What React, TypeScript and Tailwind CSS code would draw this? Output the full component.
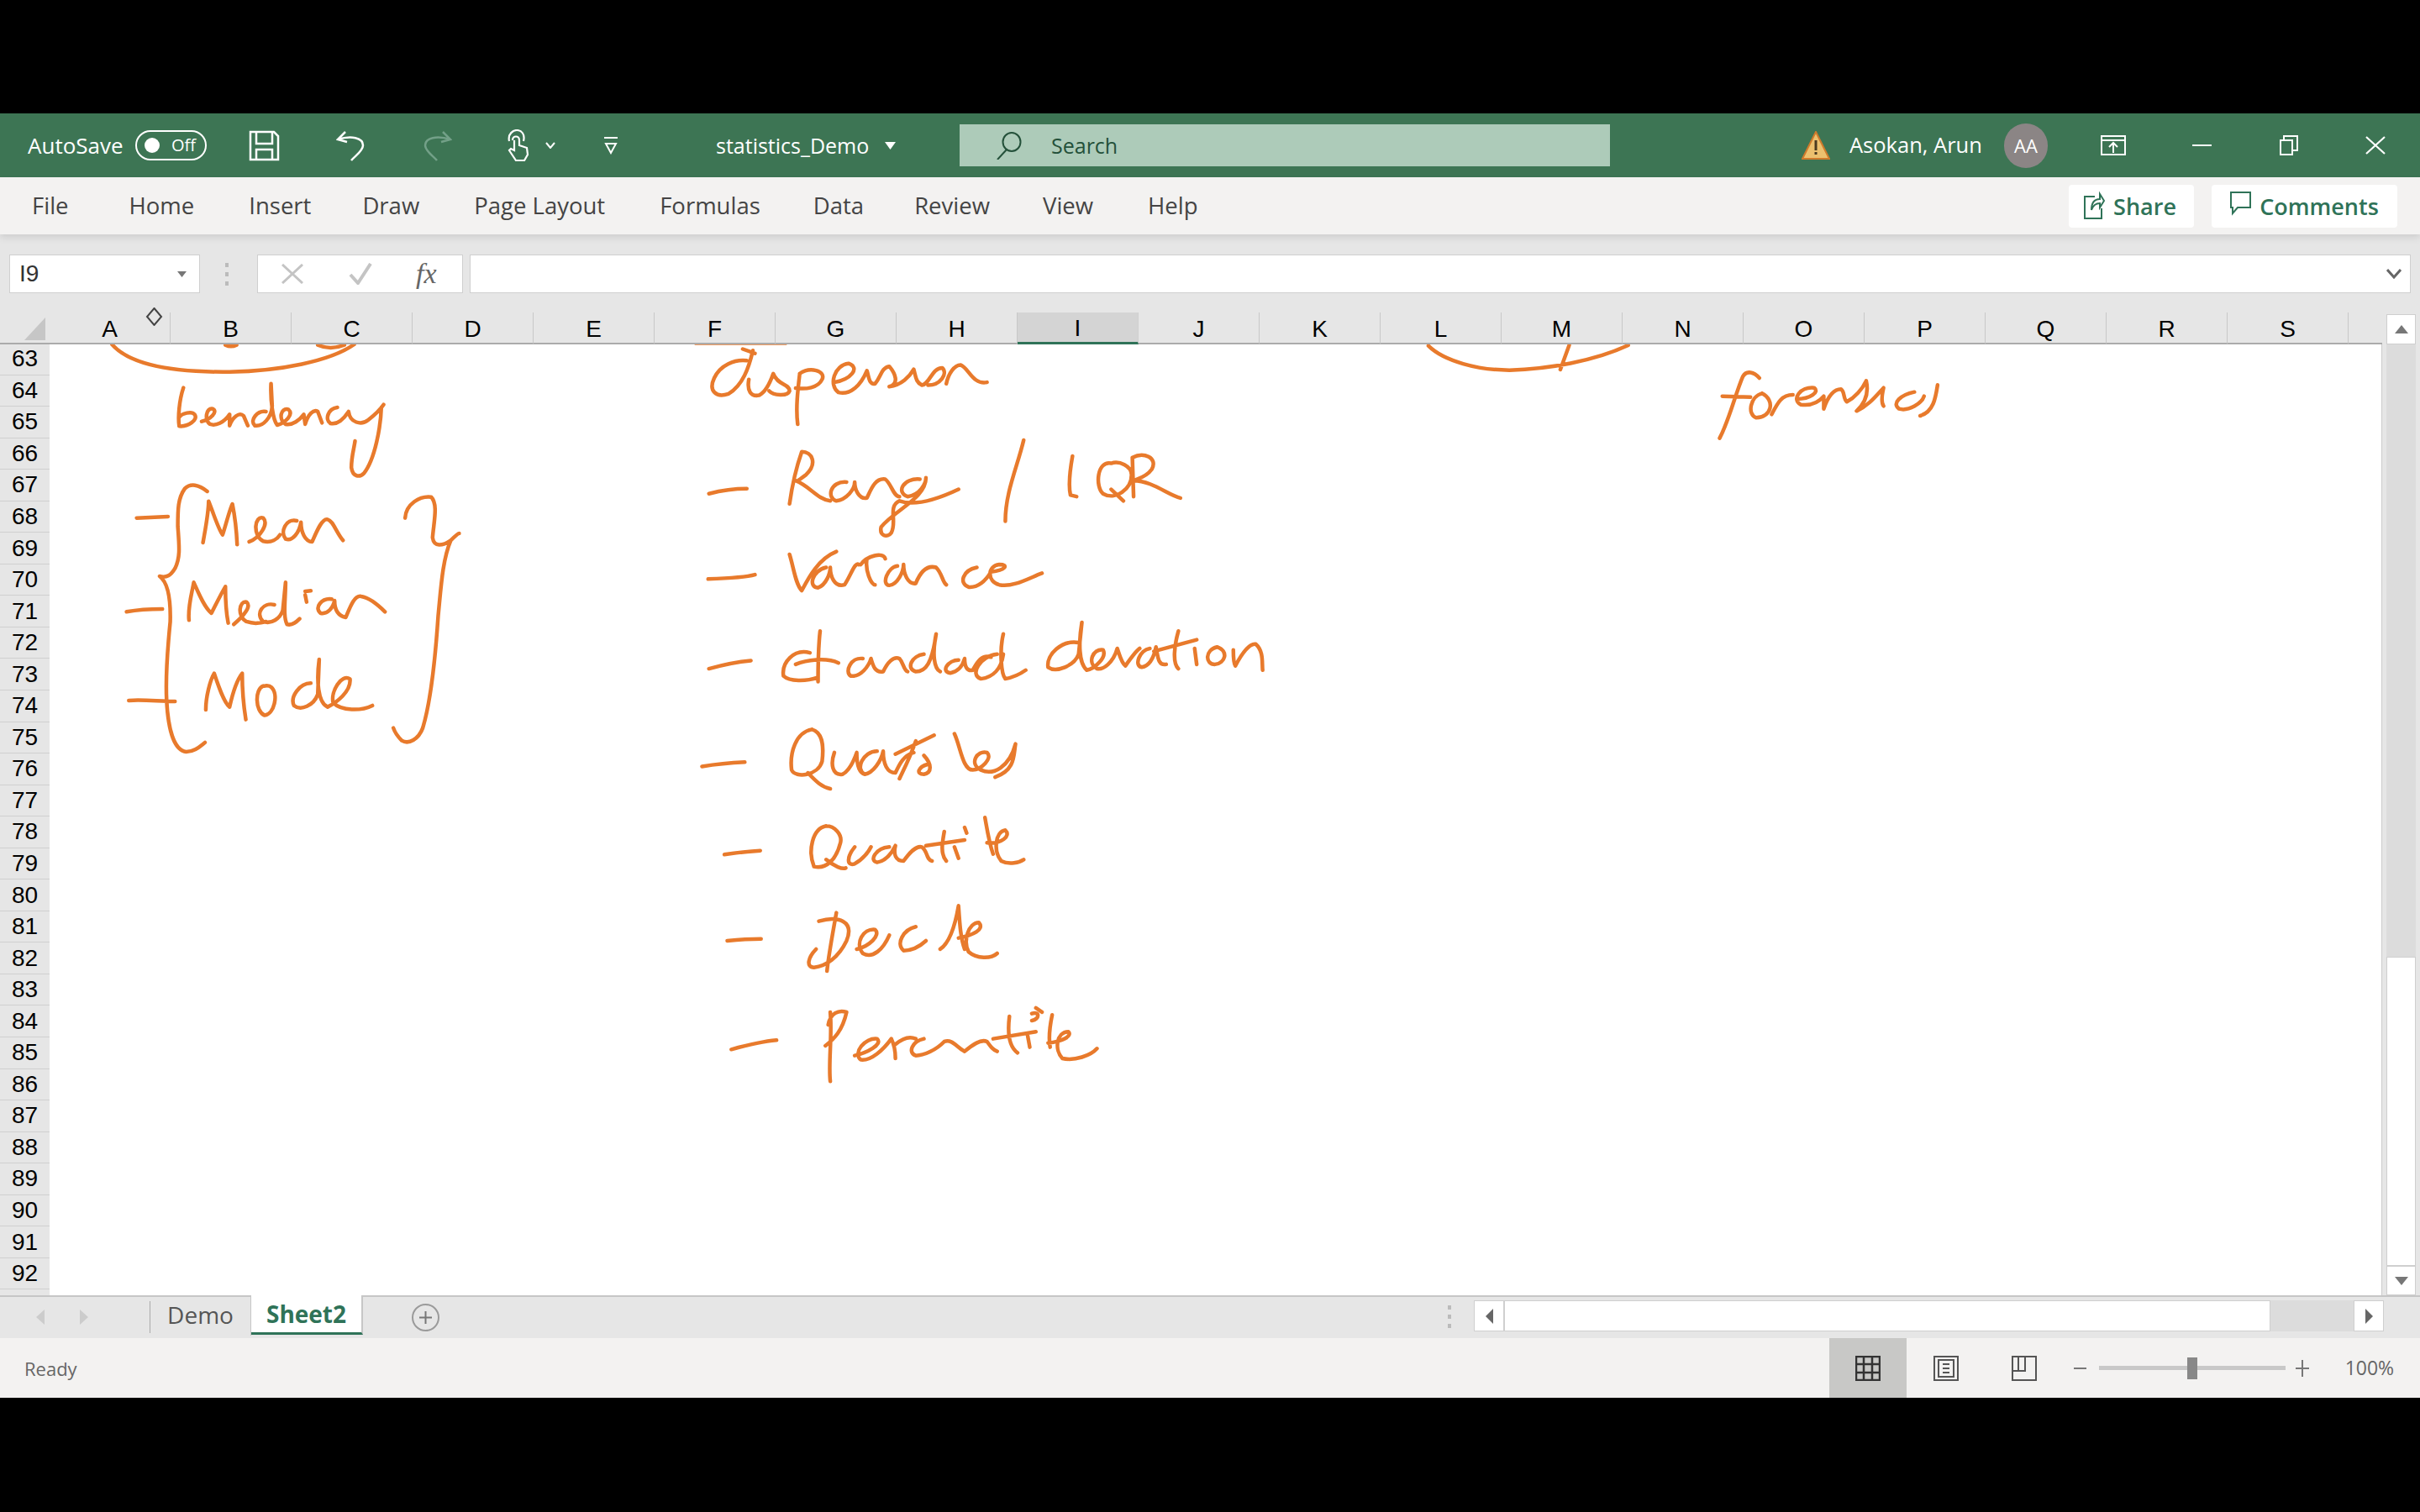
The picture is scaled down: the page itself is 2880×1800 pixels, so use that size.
const sans = 'font-["Open_Sans","Noto_Sans",sans-serif]';
const columns = ["A","B","C","D","E","F","G","H","I","J","K","L","M","N","O","P","Q","R","S"];
const rows = Array.from({ length: 31 }, (_, i) => 63 + i);
const menu = [
  { label: "File", cls: "" },
  { label: "Home", cls: "ml-[72px]" },
  { label: "Insert", cls: "ml-[65px]" },
  { label: "Draw", cls: "ml-[61px]" },
  { label: "Page Layout", cls: "ml-[65px]" },
  { label: "Formulas", cls: "ml-[65px]" },
  { label: "Data", cls: "ml-[63px]" },
  { label: "Review", cls: "ml-[60px]" },
  { label: "View", cls: "ml-[63px]" },
  { label: "Help", cls: "ml-[65px]" },
];

function Ink({ t, d }: { t: string; d: string }) {
  return (
    <g transform={t}>
      <path d={d} vectorEffect="non-scaling-stroke" />
    </g>
  );
}

const T6 = "translate(100,400) scale(0.3333,0.3333)";
const T7 = "translate(780,400) scale(0.4847,0.3444)";
const T8 = "translate(780,900) scale(0.4847,0.3333)";
const T9 = "translate(1650,400) scale(0.4592,0.3333)";

const left = `M100 30 C170 110 350 130 520 128 C700 125 880 90 965 30 M505 32 Q525 42 545 32 M835 32 Q880 52 930 32
M355 185 C340 230 335 290 340 322 C370 325 410 300 395 280 C385 268 350 275 340 290 M420 305 C450 300 480 270 460 260 C435 255 430 300 450 315 C470 322 500 310 520 280 L520 320 C530 290 555 270 570 285 L585 320
M650 270 C620 265 590 300 610 320 C640 325 670 290 672 250 L668 170 C665 230 675 300 690 318 C720 310 750 280 730 262 C700 255 695 300 720 315 C745 320 770 300 785 280 L790 315 C800 280 820 260 835 270 L850 310
M905 255 C870 260 860 300 880 312 C905 318 925 300 945 270 C950 310 990 320 1015 300 C1040 280 1060 260 1070 245 M1062 255 C1060 320 1040 440 1000 490 C985 505 960 505 955 470 C955 430 965 400 968 375
M188 650 L300 645 M440 555 C410 530 380 525 360 545 C335 580 335 620 335 680 C340 750 345 790 325 830 C310 855 295 865 270 858 C300 880 310 940 308 1020 C300 1100 290 1200 295 1300 C300 1400 320 1480 365 1485 C395 1485 415 1465 432 1452
M425 738 C435 680 445 630 445 590 C465 640 480 690 495 710 C505 680 520 620 530 600 C540 650 545 700 547 745 M590 735 C630 720 660 670 640 650 C610 640 600 710 640 733 C670 740 690 725 700 710 M760 660 C720 650 700 700 720 725 C745 735 770 700 775 665 C775 700 790 735 815 735 C830 700 850 650 870 655 C890 660 900 700 925 730
M152 985 C190 978 240 975 280 975 M375 1015 C370 970 385 920 392 880 C410 920 430 970 455 990 C470 960 490 920 505 895 C505 950 510 1000 515 1025 M535 1030 C570 1000 600 965 580 950 C555 945 545 1000 580 1020 C610 1030 630 1025 650 1020 M680 960 C640 950 610 990 640 1020 C670 1030 700 1010 710 980 L720 880 C720 940 710 1000 725 1030 C745 1035 760 1020 770 1010 M790 912 L810 910 M790 925 L795 950 M885 940 C850 935 820 970 845 990 C870 995 890 970 895 945 C895 980 910 1000 935 1005 C950 970 965 925 990 930 C1020 935 1050 960 1075 985
M160 1302 C210 1298 270 1305 325 1305 M435 1335 C435 1290 450 1230 465 1205 C480 1250 500 1310 520 1325 C530 1280 545 1230 565 1205 C565 1260 570 1320 578 1370 M640 1250 C610 1260 610 1340 645 1355 C680 1350 695 1280 670 1255 C660 1245 650 1250 640 1250 M810 1240 C770 1240 735 1290 750 1320 C775 1340 820 1320 835 1280 L840 1155 C830 1230 835 1310 870 1325 C900 1310 955 1270 950 1225 C920 1205 880 1270 890 1310 C920 1340 990 1340 1030 1320
M1147 650 C1150 600 1200 570 1240 575 C1265 600 1250 660 1245 720 C1250 755 1280 750 1310 730 C1325 715 1335 705 1340 705 M1310 730 C1280 800 1275 900 1265 1000 C1255 1150 1240 1300 1210 1400 C1195 1440 1160 1460 1135 1445 C1120 1430 1110 1415 1105 1400`;

const mid = `M100 25 L320 25 M240 50 C230 110 215 170 180 200 C150 215 130 190 145 145 C160 100 195 80 225 85 M230 150 C225 190 235 210 255 205 C270 195 280 170 290 130 C300 170 330 165 330 190 C325 210 290 205 280 190 M215 45 L245 60 M355 130 C350 190 345 250 350 305 M355 130 C380 105 420 120 410 150 C400 180 370 185 345 180 M440 160 C480 150 505 110 475 95 C440 100 425 170 450 195 C480 205 505 170 520 120 C525 140 525 170 540 165 C555 140 555 110 575 105 C590 130 600 165 575 175 C605 170 625 140 635 115 C640 140 640 160 655 170 C675 165 680 110 705 110 C720 130 700 170 670 170 M715 165 C720 130 735 100 750 100 C770 110 780 170 815 160
M132 545 C160 535 200 528 225 528 M330 580 C335 530 345 460 360 400 C385 400 400 440 370 480 C355 495 350 505 345 500 C380 520 400 565 430 570 M470 505 C430 500 420 560 445 570 C470 565 490 530 490 505 C490 530 500 565 520 560 C530 530 540 490 565 495 C580 510 585 555 600 555 M650 495 C610 490 590 540 620 555 C650 550 665 510 665 490 C665 560 590 600 555 660 C550 690 570 700 580 680 C595 640 570 590 600 570 C640 590 700 560 745 530 M905 360 C890 450 860 540 860 640 M1025 415 C1018 470 1015 520 1020 550 L1035 555 M1120 440 C1085 430 1080 520 1100 545 C1130 570 1170 530 1170 480 C1170 450 1140 430 1120 440 M1120 530 L1150 570 M1175 555 L1172 420 C1200 400 1235 420 1220 460 C1205 490 1180 495 1175 500 C1220 500 1260 550 1290 560
M130 840 C170 838 220 835 245 825 M330 755 C340 800 345 860 360 880 C375 840 400 770 445 745 M420 800 C385 810 375 870 400 870 C420 860 430 820 430 800 C430 830 440 870 465 860 C480 830 490 780 500 790 M505 790 C520 760 560 745 565 770 M520 770 C515 810 530 860 540 860 M595 795 C570 800 555 860 575 862 C595 860 610 815 610 790 C610 820 620 860 640 855 C650 820 665 790 690 800 C705 820 705 850 715 860 M790 800 C755 810 745 855 770 868 C790 870 810 850 825 815 C860 810 870 790 845 790 C815 795 815 850 845 860 C880 870 920 835 950 820
M132 1150 C170 1135 210 1125 235 1122 M380 1095 C340 1080 310 1130 315 1175 C330 1195 370 1195 400 1180 M405 1020 C400 1080 400 1150 400 1195 M345 1135 C370 1120 420 1110 450 1130 M510 1115 C480 1110 465 1160 480 1175 C505 1180 525 1140 530 1115 C535 1140 540 1165 560 1160 C570 1130 585 1105 600 1115 C610 1130 610 1155 620 1160 M660 1100 C630 1105 615 1150 640 1160 C665 1160 680 1130 690 1030 C680 1100 685 1150 700 1160 M745 1120 C720 1120 700 1160 725 1165 C745 1160 755 1140 760 1115 C760 1140 765 1160 780 1155 C790 1130 800 1100 825 1110 M840 1100 C800 1105 770 1170 800 1185 C830 1180 850 1150 855 1100 M855 1030 C845 1090 850 1170 860 1185 C880 1180 895 1170 910 1155
M1040 1060 C1000 1050 960 1100 965 1145 C985 1165 1030 1140 1040 1100 L1048 990 C1040 1060 1040 1130 1060 1155 C1080 1150 1110 1110 1100 1085 C1075 1080 1060 1130 1085 1150 C1100 1155 1125 1130 1135 1080 C1140 1100 1145 1130 1155 1140 C1170 1110 1180 1090 1190 1080 M1215 1080 C1190 1085 1175 1140 1195 1145 C1215 1140 1225 1110 1230 1075 C1235 1110 1235 1140 1255 1135 M1285 1020 C1275 1070 1270 1130 1285 1150 M1225 1090 L1330 1050 M1325 1080 L1330 1135 M1380 1075 C1350 1085 1350 1135 1375 1135 C1400 1130 1410 1090 1380 1075 M1420 1085 C1420 1110 1420 1130 1425 1140 C1440 1100 1460 1060 1475 1065 C1495 1090 1490 1130 1492 1155
M115 1488 C150 1480 190 1475 220 1473 M385 1360 C345 1370 330 1440 335 1500 C345 1530 400 1520 410 1470 C415 1410 410 1370 385 1360 M375 1510 C395 1540 410 1560 430 1565 M440 1440 C430 1480 435 1520 460 1515 C480 1500 490 1460 495 1440 C495 1480 500 1510 515 1515 M545 1435 C510 1435 490 1500 515 1515 C535 1510 555 1470 560 1435 C560 1480 570 1510 590 1510 C600 1480 610 1450 635 1440 M640 1400 C625 1460 610 1500 600 1530 M590 1445 L685 1380 M660 1450 C680 1480 680 1510 660 1515 C640 1515 645 1490 670 1480 M735 1375 C750 1420 755 1500 780 1500 C800 1500 830 1460 815 1440 C790 1430 770 1480 800 1500 C830 1520 870 1490 885 1410 C880 1450 885 1500 835 1525`;

const low = `M170 352 C200 345 230 340 258 338 M420 250 C385 260 375 340 390 395 C420 405 445 370 455 310 C460 280 440 250 420 250 M420 370 C440 395 460 405 468 400 M490 325 C470 360 470 395 490 385 C510 370 525 340 530 325 M575 325 C540 330 525 375 545 380 C565 375 580 350 590 320 C585 350 590 375 610 375 C625 345 640 320 655 325 C670 340 665 370 680 375 M710 270 C705 310 700 350 715 375 M665 320 L760 300 M760 255 L765 275 M735 325 L745 365 M810 220 C815 260 820 310 830 350 M815 310 C850 315 875 285 860 265 C835 270 830 340 850 375 C870 390 895 380 905 370
M177 660 C210 655 240 653 260 653 M445 560 C435 640 425 720 422 768 M402 590 C450 570 490 590 470 660 C450 720 420 750 390 755 C370 755 375 720 395 690 M495 690 C525 680 555 640 540 620 C510 615 490 670 510 705 C535 725 560 690 575 640 M640 610 C610 620 590 670 610 695 C630 695 650 680 665 660 M700 690 C720 670 735 620 745 535 C748 600 750 650 760 690 M745 650 C780 640 810 620 795 595 C770 595 755 660 770 700 C790 725 825 725 840 705
M187 1048 C220 1035 260 1020 298 1015 M430 1162 C425 1100 435 1000 430 915 M418 1035 C440 1010 460 980 470 915 C450 905 430 920 425 960 M490 1070 C520 1060 560 1030 545 1010 C515 1005 485 1060 505 1085 C530 1090 560 1050 580 1010 C590 1040 590 1070 590 1080 M590 1030 C610 1005 625 1000 640 1010 M660 1010 C630 1020 620 1060 640 1070 C660 1070 690 1050 710 1020 C730 1010 740 1040 760 1055 C780 1030 800 1010 815 1020 C825 1040 830 1050 840 1055 M870 930 C865 990 870 1040 890 1060 M830 1010 L935 985 M915 1000 L920 1040 M925 920 C945 910 945 940 925 945 M935 900 L950 915 M975 925 C970 960 965 1000 970 1040 M965 1025 C1000 1020 1025 1000 1015 985 C985 985 980 1050 1000 1080 C1030 1090 1070 1070 1085 1045`;

const right = `M110 35 C150 90 240 122 320 122 C420 118 540 90 628 33 M475 33 L452 120 M968 150 C955 130 935 120 925 145 C905 210 890 300 865 365 M872 215 L945 218 M975 205 C945 215 935 280 960 292 C1000 290 1010 230 975 205 M1000 280 C1015 240 1025 210 1055 210 M1065 225 C1100 225 1125 200 1110 185 C1075 180 1050 225 1075 245 C1100 250 1120 240 1135 215 L1135 260 C1145 220 1160 190 1180 190 C1190 200 1185 225 1195 235 C1215 220 1235 190 1245 160 C1250 190 1250 230 1220 268 C1250 250 1270 215 1290 185 C1285 215 1285 240 1290 250 M1370 200 C1335 210 1310 240 1330 260 C1355 270 1390 240 1395 215 M1430 175 C1425 220 1420 270 1385 285`;

function Handwriting() {
  return (
    <svg
      className="absolute inset-0 h-full w-full"
      viewBox="59 410 2776 1132"
      preserveAspectRatio="none"
      fill="none"
      stroke="#e87a2c"
      strokeWidth={4.5}
      strokeLinecap="round"
      strokeLinejoin="round"
    >
      <Ink t={T6} d={left} />
      <Ink t={T7} d={mid} />
      <Ink t={T8} d={low} />
      <Ink t={T9} d={right} />
    </svg>
  );
}

function TitleBar() {
  return (
    <div className={`flex h-[76px] shrink-0 items-center bg-[#3d7554] text-white ${sans}`}>
      <span className="ml-[33px] w-[114px] whitespace-nowrap text-[26px] leading-none">AutoSave</span>
      <div className="ml-[14px] flex h-[36px] w-[85px] items-center rounded-full border-2 border-white">
        <span className="ml-[9px] h-[18px] w-[18px] rounded-full bg-white" />
        <span className="ml-[14px] text-[20px] leading-none">Off</span>
      </div>
      <svg className="ml-[50px]" width="37" height="37" viewBox="0 0 37 37" fill="none" stroke="white" strokeWidth="2.5">
        <path d="M2 2H30L35 7V35H2Z" />
        <path d="M9 2V16H28V2M9 35V23H28V35" />
      </svg>
      <svg className="ml-[67px]" width="34" height="37" viewBox="0 0 34 37" fill="none" stroke="white" strokeWidth="2.5">
        <path d="M11 2L2 11L13 14M2 11C18 6 32 9 32 18C32 25 22 31 18 36" />
      </svg>
      <svg className="ml-[70px]" width="34" height="37" viewBox="0 0 34 37" fill="none" stroke="#73a088" strokeWidth="2.5">
        <path d="M23 2L32 11L21 14M32 11C16 6 2 9 2 18C2 25 12 31 16 36" />
      </svg>
      <svg className="ml-[65px]" width="27" height="38" viewBox="0 0 27 38" fill="none" stroke="white" strokeWidth="2.2">
        <path d="M3 14C1 5 8 1 12 1C18 1 22 6 20 14" />
        <path d="M7 13C7 7 15 7 15 13V19L24 22L25 30L21 37H11L3 25L5 23L9 25V13" />
      </svg>
      <svg className="ml-[19px]" width="12" height="8" viewBox="0 0 12 8" fill="none" stroke="white" strokeWidth="2">
        <path d="M1 1L6 7L11 1" />
      </svg>
      <svg className="ml-[58px]" width="16" height="22" viewBox="0 0 16 22" fill="none" stroke="white" strokeWidth="2">
        <path d="M0 2H16M2 9H14L8 20Z" />
      </svg>
      <span className="ml-[117px] w-[184px] whitespace-nowrap text-[25px] leading-none">statistics_Demo</span>
      <svg className="ml-[17px]" width="13" height="9" viewBox="0 0 13 9" fill="white">
        <path d="M0 0H13L6.5 9Z" />
      </svg>
      <div className="ml-[76px] flex h-[50px] w-[774px] items-center bg-[#adcbb9] text-[#24513a]">
        <svg className="ml-[44px]" width="30" height="33" viewBox="0 0 30 33" fill="none" stroke="#24513a" strokeWidth="2">
          <ellipse cx="18" cy="12" rx="10.5" ry="11" />
          <path d="M12 21L1 33" />
        </svg>
        <span className="ml-[35px] text-[25px] leading-none">Search</span>
      </div>
      <svg className="ml-[228px]" width="34" height="34" viewBox="0 0 34 34">
        <path d="M17 1L33 33H1Z" fill="#ecc06e" stroke="#cf7a2c" strokeWidth="2" />
        <rect x="15.5" y="11" width="3" height="12" fill="#4b3a20" />
        <rect x="15.5" y="25" width="3" height="3" fill="#4b3a20" />
      </svg>
      <span className="ml-[23px] w-[159px] whitespace-nowrap text-[25.5px] leading-none">Asokan, Arun</span>
      <div className="ml-[25px] flex h-[53px] w-[52px] items-center justify-center rounded-full bg-[#8b8585] text-[22px] leading-none">AA</div>
      <svg className="ml-[63px]" width="30" height="24" viewBox="0 0 30 24" fill="none" stroke="white" strokeWidth="2">
        <path d="M1 1H29V23H1ZM1 6H29M15 21V10M10 14L15 9L20 14" />
      </svg>
      <span className="ml-[79px] h-[2.5px] w-[23px] bg-white" />
      <svg className="ml-[80px]" width="24" height="24" viewBox="0 0 24 24" fill="none" stroke="white" strokeWidth="2">
        <path d="M2 6H16V23H2ZM6 6V1H22V18H16" />
      </svg>
      <svg className="ml-[79px]" width="24" height="22" viewBox="0 0 24 22" fill="none" stroke="white" strokeWidth="2.2">
        <path d="M1 1L23 21M23 1L1 21" />
      </svg>
    </div>
  );
}

function MenuBar() {
  return (
    <div className={`relative flex h-[68px] shrink-0 items-center bg-[#f3f2f1] shadow-[0_4px_8px_rgba(0,0,0,0.1)] ${sans}`}>
      <div className="ml-[38px] flex text-[27.5px] leading-none text-[#444444]">
        {menu.map((m) => (
          <span key={m.label} className={`whitespace-nowrap ${m.cls}`}>{m.label}</span>
        ))}
      </div>
      <div className="ml-auto mr-[27px] flex items-center gap-[21px] text-[27px] font-semibold leading-none text-[#2f7358]">
        <div className="flex h-[51px] w-[149px] items-center justify-center gap-[10px] rounded-sm bg-white pr-[4px]">
          <svg width="26" height="42" viewBox="0 0 26 42" fill="none" stroke="#2f7358" strokeWidth="2">
            <path d="M14 10H2V36H22V24M10 26C10 16 15 13 20 13V7L25 15L20 23V18C16 18 12 20 10 26Z" />
          </svg>
          <span>Share</span>
        </div>
        <div className="flex h-[51px] w-[221px] items-center justify-center gap-[10px] rounded-sm bg-white">
          <svg width="25" height="36" viewBox="0 0 25 36" fill="none" stroke="#2f7358" strokeWidth="2">
            <path d="M1 2H24V20H9L3 27V20H1Z" />
          </svg>
          <span>Comments</span>
        </div>
      </div>
    </div>
  );
}

function FormulaBar() {
  return (
    <div className="flex h-[93px] shrink-0 items-start bg-[#e6e6e6] pt-[24px]">
      <div className="ml-[11px] flex h-[46px] w-[227px] items-center border border-[#cfcfcf] bg-white font-['Liberation_Sans',sans-serif] text-[28px] leading-none text-[#333333]">
        <span className="ml-[11px]">I9</span>
        <svg className="ml-auto mr-[15px]" width="11" height="7" viewBox="0 0 11 7" fill="#777777"><path d="M0 0H11L5.5 7Z" /></svg>
      </div>
      <div className="ml-[30px] mt-[10px] flex flex-col gap-[6px]">
        <span className="h-[5px] w-[4px] bg-[#bbbbbb]" />
        <span className="h-[5px] w-[4px] bg-[#bbbbbb]" />
        <span className="h-[5px] w-[4px] bg-[#bbbbbb]" />
      </div>
      <div className="ml-[34px] flex h-[46px] w-[245px] items-center border border-[#cfcfcf] bg-white">
        <svg className="ml-[28px]" width="26" height="24" viewBox="0 0 26 24" fill="none" stroke="#c4c4c4" strokeWidth="3"><path d="M1 1L25 23M25 1L1 23" /></svg>
        <svg className="ml-[54px]" width="28" height="26" viewBox="0 0 28 26" fill="none" stroke="#c4c4c4" strokeWidth="4"><path d="M2 14L11 24L26 1" /></svg>
        <span className="ml-[52px] font-['Liberation_Serif',serif] text-[34px] italic leading-none text-[#666666]">fx</span>
      </div>
      <div className="ml-[8px] flex h-[46px] w-[2310px] items-center justify-end border border-[#cfcfcf] bg-white">
        <svg className="mr-[10px]" width="18" height="12" viewBox="0 0 18 12" fill="none" stroke="#666666" strokeWidth="3"><path d="M1 1L9 10L17 1" /></svg>
      </div>
    </div>
  );
}

function ColumnHeader() {
  return (
    <div className="relative flex h-[38px] shrink-0 bg-[#e6e6e6] font-['Liberation_Sans',sans-serif] text-[28px] leading-none text-black">
      <div className="flex h-[38px] w-[59px] shrink-0 items-start justify-end border-b-2 border-[#ababab] pr-[5px] pt-[6px]">
        <svg width="25" height="27" viewBox="0 0 25 27" fill="#c6c6c6"><path d="M25 0V27H0Z" /></svg>
      </div>
      {columns.map((c) => (
        <div
          key={c}
          className={
            c === "I"
              ? "flex h-[38px] w-[144px] shrink-0 items-center justify-center border-b-[3px] border-r border-[#2f7358] border-r-[#d0d0d0] bg-[#d4d4d4] pt-[3px]"
              : "flex h-[38px] w-[144px] shrink-0 items-center justify-center border-b-2 border-r border-[#ababab] border-r-[#c8c8c8] pt-[3px]"
          }
        >
          {c}
        </div>
      ))}
      <div className="h-[38px] w-[40px] shrink-0 border-b-2 border-[#ababab]" />
      <div className="ml-[5px] flex h-[36px] w-[35px] shrink-0 items-center justify-center self-end border border-[#cfcfcf] bg-white">
        <svg width="16" height="10" viewBox="0 0 16 10" fill="#777777"><path d="M8 0L16 10H0Z" /></svg>
      </div>
      <svg className="absolute left-[173px] top-[-6px]" width="21" height="22" viewBox="0 0 21 22" fill="none" stroke="#444444" strokeWidth="2">
        <path d="M10.5 1L19 11L10.5 21L2 11Z" />
      </svg>
    </div>
  );
}

function Sheet() {
  return (
    <div className="flex h-[1132px] shrink-0 overflow-hidden bg-[#e6e6e6]">
      <div className="mt-[-1px] w-[59px] shrink-0 font-['Liberation_Sans',sans-serif] text-[28px] leading-none text-black">
        {rows.map((r) => (
          <div key={r} className="flex h-[37.55px] items-center justify-center border-b border-[#d0d0d0]">{r}</div>
        ))}
      </div>
      <div className="relative h-[1132px] w-[2776px] shrink-0 border-r border-[#cccccc] bg-white">
        <Handwriting />
      </div>
      <div className="ml-[5px] flex h-[1134px] w-[35px] shrink-0 flex-col bg-[#dcdcdc]">
        <div className="h-[729px]" />
        <div className="h-[368px] border border-[#cfcfcf] bg-white" />
        <div className="flex h-[35px] items-center justify-center border border-[#cfcfcf] bg-white">
          <svg width="16" height="10" viewBox="0 0 16 10" fill="#777777"><path d="M0 0H16L8 10Z" /></svg>
        </div>
      </div>
    </div>
  );
}

function TabBar() {
  return (
    <div className={`flex h-[51px] shrink-0 items-start border-t-2 border-[#c6c6c6] bg-[#e6e6e6] ${sans}`}>
      <svg className="ml-[43px] mt-[15px]" width="10" height="18" viewBox="0 0 10 18" fill="#cccccc"><path d="M10 0V18L0 9Z" /></svg>
      <svg className="ml-[42px] mt-[15px]" width="10" height="18" viewBox="0 0 10 18" fill="#cccccc"><path d="M0 0V18L10 9Z" /></svg>
      <span className="ml-[73px] mt-[5px] h-[38px] w-px bg-[#aaaaaa]" />
      <div className="flex h-[46px] w-[120px] items-center justify-center border-r border-[#c6c6c6] pb-[5px] text-[28px] leading-none text-[#555555]">Demo</div>
      <div className="mt-[-2px] flex h-[47px] w-[133px] items-center justify-center border-b-[3px] border-r-2 border-[#2f7358] border-r-[#c6c6c6] bg-white text-[28px] font-bold leading-none text-[#2f7358]">Sheet2</div>
      <div className="ml-[58px] mt-[8px] flex h-[33px] w-[33px] items-center justify-center rounded-full border-2 border-[#9a9a9a]">
        <svg width="15" height="15" viewBox="0 0 15 15" fill="none" stroke="#777777" strokeWidth="2"><path d="M7.5 0V15M0 7.5H15" /></svg>
      </div>
      <div className="ml-[1200px] mt-[10px] flex flex-col gap-[6px]">
        <span className="h-[5px] w-[4px] bg-[#bbbbbb]" />
        <span className="h-[5px] w-[4px] bg-[#bbbbbb]" />
        <span className="h-[5px] w-[4px] bg-[#bbbbbb]" />
      </div>
      <div className="ml-[27px] mt-[4px] flex h-[37px] w-[1083px] bg-[#dcdcdc]">
        <div className="flex h-[37px] w-[36px] items-center justify-center border border-[#cfcfcf] bg-white">
          <svg width="9" height="18" viewBox="0 0 9 18" fill="#666666"><path d="M9 0V18L0 9Z" /></svg>
        </div>
        <div className="h-[37px] w-[912px] border border-[#cfcfcf] bg-white" />
        <div className="ml-auto flex h-[37px] w-[36px] items-center justify-center border border-[#cfcfcf] bg-white">
          <svg width="9" height="18" viewBox="0 0 9 18" fill="#666666"><path d="M0 0V18L9 9Z" /></svg>
        </div>
      </div>
    </div>
  );
}

function StatusBar() {
  return (
    <div className={`flex h-[71px] shrink-0 items-center bg-[#f3f2f1] text-[#666666] ${sans}`}>
      <span className="ml-[29px] text-[22px] leading-none">Ready</span>
      <div className="ml-[2085px] flex h-[71px] w-[92px] items-center justify-center bg-[#c8c8c6]">
        <svg width="30" height="30" viewBox="0 0 30 30" fill="none" stroke="#333333" strokeWidth="2.5">
          <path d="M1 1H29V29H1ZM10 1V29M20 1V29M1 10H29M1 20H29" />
        </svg>
      </div>
      <svg className="ml-[32px]" width="30" height="30" viewBox="0 0 30 30" fill="none" stroke="#555555" strokeWidth="2">
        <path d="M1 1H29V29H1ZM6 5H24V25H6ZM11 10H19M11 15H19M11 20H19" />
      </svg>
      <svg className="ml-[63px]" width="30" height="30" viewBox="0 0 30 30" fill="none" stroke="#555555" strokeWidth="2">
        <path d="M1 1H29V29H1ZM1 18H16V1M8 1V18" />
      </svg>
      <span className="ml-[44px] h-[2px] w-[15px] bg-[#777777]" />
      <div className="relative ml-[15px] flex h-[26px] w-[222px] items-center">
        <span className="h-[5px] w-full bg-[#c8c8c8]" />
        <span className="absolute left-[105px] top-0 h-[26px] w-[12px] bg-[#888888]" />
      </div>
      <svg className="ml-[12px]" width="16" height="26" viewBox="0 0 16 26" fill="none" stroke="#777777" strokeWidth="2"><path d="M8 3V23M0 13H16" /></svg>
      <span className="ml-[43px] whitespace-nowrap text-[23px] leading-none">100%</span>
    </div>
  );
}

export default function App() {
  return (
    <div className="flex h-[1800px] w-[2880px] flex-col overflow-hidden bg-black pt-[135px]">
      <TitleBar />
      <MenuBar />
      <FormulaBar />
      <ColumnHeader />
      <Sheet />
      <TabBar />
      <StatusBar />
    </div>
  );
}
